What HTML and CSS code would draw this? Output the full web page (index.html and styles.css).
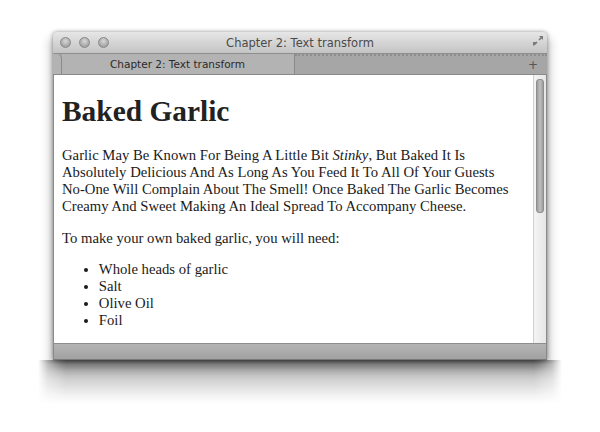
FILE: index.html
```html
<!DOCTYPE html>
<html>
<head>
<meta charset="utf-8">
<link rel="stylesheet" href="styles.css">
</head>
<body>
<div class="stage">
  <div class="window">
    <div class="titlebar">
      <div class="lights">
        <span class="light"></span><span class="light"></span><span class="light"></span>
      </div>
      <div class="title">Chapter 2: Text transform</div>
      <div class="resize">
        <svg width="12" height="12" viewBox="0 0 12 12">
          <path d="M7 1 H11 V5 Z M1 11 V7 H5 Z" fill="#7a7a7a"/>
          <path d="M10 2 L7 5 M2 10 L5 7" stroke="#7a7a7a" stroke-width="1.6"/>
        </svg>
      </div>
    </div>
    <div class="tabbar">
      <div class="stub"></div>
      <div class="tab">Chapter 2: Text transform</div>
      <div class="rest"><span class="plus">+</span></div>
    </div>
    <div class="main">
      <div class="content">
        <h1 class="heading">Baked Garlic</h1>
        <p class="para">Garlic May Be Known For Being A Little Bit <i class="stinky">Stinky</i>, But Baked It Is Absolutely Delicious And As Long As You Feed It To All Of Your Guests No-One Will Complain About The Smell! Once Baked The Garlic Becomes Creamy And Sweet Making An Ideal Spread To Accompany Cheese.</p>
        <p class="para">To make your own baked garlic, you will need:</p>
        <ul class="list">
          <li>Whole heads of garlic</li>
          <li>Salt</li>
          <li>Olive Oil</li>
          <li>Foil</li>
        </ul>
      </div>
      <div class="scrollbar"><div class="thumb"></div></div>
    </div>
    <div class="bottombar"></div>
  </div>
  <div class="shadow"></div>
</div>
</body>
</html>
```
FILE: styles.css
```css
html, body {
  margin: 0;
  padding: 0;
  background: #ffffff;
}
.stage {
  padding: 32px 0 0 53px;
}
.window {
  width: 494px;
  background: #c9c9c9;
  box-shadow: 0 0 4px rgba(0,0,0,0.4), -4px 6px 10px rgba(0,0,0,0.18), 4px 6px 10px rgba(0,0,0,0.18);
  border-radius: 4px 4px 0 0;
}
.shadow {
  width: 524px;
  height: 44px;
  margin-left: -15px;
  background: linear-gradient(to bottom, rgba(0,0,0,0.55) 0, rgba(0,0,0,0.38) 10%, rgba(0,0,0,0.18) 45%, rgba(0,0,0,0.05) 80%, rgba(0,0,0,0) 100%);
  -webkit-mask-image: linear-gradient(to right, transparent 0, rgba(0,0,0,0.6) 10px, black 28px, black calc(100% - 28px), rgba(0,0,0,0.6) calc(100% - 10px), transparent 100%);
  mask-image: linear-gradient(to right, transparent 0, rgba(0,0,0,0.6) 10px, black 28px, black calc(100% - 28px), rgba(0,0,0,0.6) calc(100% - 10px), transparent 100%);
}
.titlebar {
  height: 21px;
  display: grid;
  grid-template-columns: 1fr auto 1fr;
  align-items: center;
  background: linear-gradient(#e6e6e6, #c4c4c4);
  border-radius: 4px 4px 0 0;
  border-bottom: 1px solid #8e8e8e;
}
.lights {
  display: flex;
  gap: 8px;
  padding-left: 7px;
}
.light {
  width: 9px;
  height: 9px;
  border-radius: 50%;
  border: 1px solid #8a8a8a;
  background: radial-gradient(circle at 50% 35%, #d8d8d8, #a4a4a4 70%);
}
.title {
  font-family: "DejaVu Sans", sans-serif;
  font-size: 11.5px;
  color: #4a4a4a;
}
.resize {
  display: flex;
  justify-content: flex-end;
  padding-right: 3px;
  padding-bottom: 4px;
}
.tabbar {
  height: 20px;
  display: flex;
  background: #a6a6a6;
  border-bottom: 1px solid #8a8a8a;
}
.stub {
  width: 8px;
  background: #b3b3b3;
  border-right: 1px solid #8a8a8a;
  border-radius: 0 5px 0 0;
}
.tab {
  width: 233px;
  background: #b3b3b3;
  border-right: 1px solid #8a8a8a;
  font-family: "DejaVu Sans", sans-serif;
  font-size: 10.5px;
  color: #2a2a2a;
  display: flex;
  align-items: center;
  padding-left: 48px;
  box-sizing: border-box;
}
.rest {
  flex: 1;
  display: flex;
  justify-content: flex-end;
  align-items: center;
  border-top: 2px dotted #8f8f8f;
  box-sizing: border-box;
}
.plus {
  font-family: "DejaVu Sans", sans-serif;
  font-size: 12px;
  color: #555;
  padding-right: 9px;
  line-height: 1;
}
.main {
  display: flex;
  height: 268px;
  background: #ffffff;
  border-left: 1px solid #8a8a8a;
  border-right: 1px solid #8a8a8a;
}
.content {
  flex: 1;
  overflow: hidden;
  padding: 0 18px 0 8px;
  font-family: "Liberation Serif", "Times New Roman", serif;
  font-size: 14.7px;
  color: #1a1a1a;
  display: flow-root;
}
.heading {
  font-size: 29.4px;
  font-weight: bold;
  color: #222;
  margin: 19.7px 0;
}
.para {
  margin: 14.7px 0;
  line-height: 16.9px;
}
.stinky {
  font-style: italic;
}
.list {
  margin: 14.7px 0;
  padding-left: 36.8px;
  line-height: 16.9px;
}
.scrollbar {
  width: 13px;
  background: linear-gradient(90deg, #f4f4f4, #e6e6e6);
  border-left: 1px solid #d0d0d0;
  padding-top: 4px;
  display: flex;
  justify-content: center;
  box-sizing: border-box;
}
.thumb {
  width: 6px;
  height: 132px;
  border-radius: 3px;
  background: linear-gradient(90deg, #9c9c9c, #c0c0c0, #9c9c9c);
  border: 1px solid #8e8e8e;
}
.bottombar {
  height: 15px;
  background: linear-gradient(#b4b4b4, #a2a2a2);
  border-top: 1px solid #8e8e8e;
  border-left: 1px solid #8a8a8a;
  border-right: 1px solid #8a8a8a;
  border-bottom: 1px solid #7a7a7a;
}
```
